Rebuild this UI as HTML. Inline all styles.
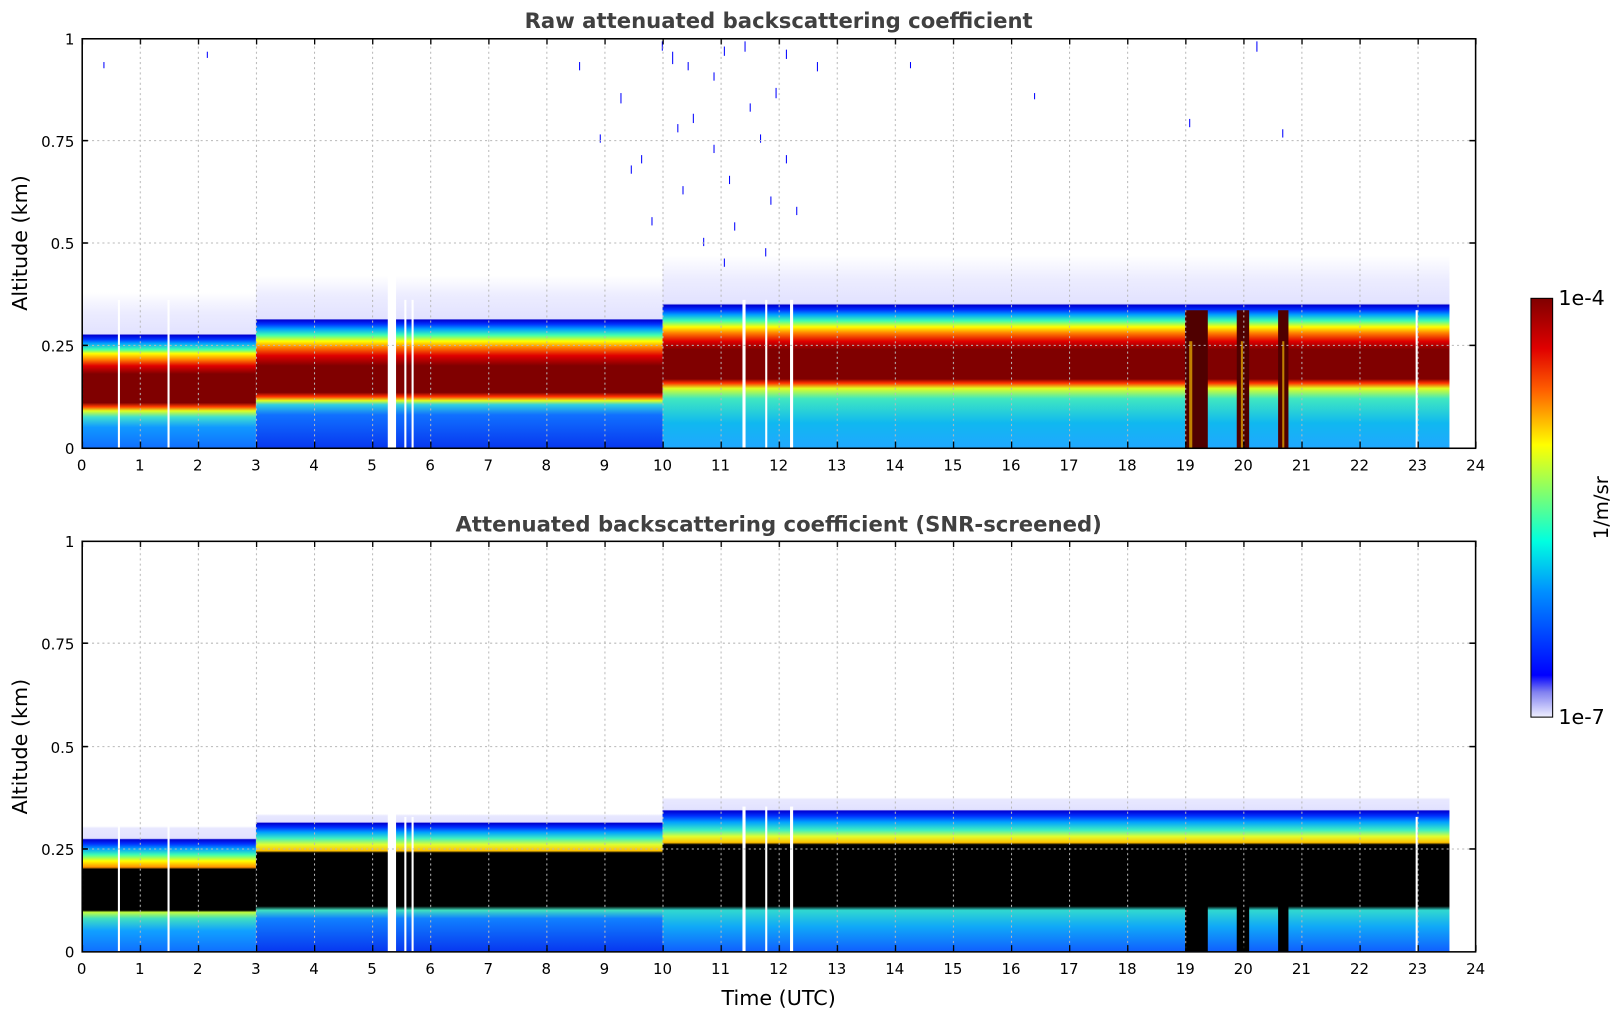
<!DOCTYPE html>
<html><head><meta charset="utf-8"><style>
html,body{margin:0;padding:0;background:#fff;overflow:hidden}
svg{display:block;font-family:"DejaVu Sans","Liberation Sans",sans-serif;}
.t{font-size:14.5px;fill:#000}
.ti{font-size:20.5px;font-weight:bold;fill:#404040}
.al{font-size:20px;fill:#000}
</style></head><body>
<svg width="1621" height="1020" viewBox="0 0 1567.6 986.4" preserveAspectRatio="none" xmlns="http://www.w3.org/2000/svg">
<defs>
<linearGradient id="tA" gradientUnits="userSpaceOnUse" x1="0" y1="433" x2="0" y2="37">
<stop offset="0" stop-color="#1070ff"/><stop offset="0.05" stop-color="#1098ff"/><stop offset="0.075" stop-color="#40e0d0"/><stop offset="0.09" stop-color="#e0ff20"/><stop offset="0.1" stop-color="#ff4000"/><stop offset="0.11" stop-color="#800000"/><stop offset="0.18" stop-color="#800000"/><stop offset="0.2" stop-color="#e00000"/><stop offset="0.215" stop-color="#ff8000"/><stop offset="0.23" stop-color="#ffff00"/><stop offset="0.24" stop-color="#40ffb0"/><stop offset="0.255" stop-color="#00a0ff"/><stop offset="0.265" stop-color="#0030ff"/><stop offset="0.275" stop-color="#0000d0"/><stop offset="0.278" stop-color="#e2e2ff"/><stop offset="0.33" stop-color="#ececff"/><stop offset="0.38" stop-color="#ffffff"/>
</linearGradient>
<linearGradient id="tB" gradientUnits="userSpaceOnUse" x1="0" y1="433" x2="0" y2="37">
<stop offset="0" stop-color="#0838f0"/><stop offset="0.08" stop-color="#1070ff"/><stop offset="0.105" stop-color="#30d0e0"/><stop offset="0.115" stop-color="#e0ff20"/><stop offset="0.125" stop-color="#ff3000"/><stop offset="0.135" stop-color="#800000"/><stop offset="0.2" stop-color="#800000"/><stop offset="0.225" stop-color="#e00000"/><stop offset="0.245" stop-color="#ff8000"/><stop offset="0.26" stop-color="#ffff00"/><stop offset="0.275" stop-color="#40ffb0"/><stop offset="0.29" stop-color="#00a0ff"/><stop offset="0.302" stop-color="#0030ff"/><stop offset="0.312" stop-color="#0000d0"/><stop offset="0.315" stop-color="#e2e2ff"/><stop offset="0.37" stop-color="#ececff"/><stop offset="0.42" stop-color="#ffffff"/>
</linearGradient>
<linearGradient id="tC" gradientUnits="userSpaceOnUse" x1="0" y1="433" x2="0" y2="37">
<stop offset="0" stop-color="#20a8ff"/><stop offset="0.06" stop-color="#10b8f0"/><stop offset="0.12" stop-color="#40e8c0"/><stop offset="0.145" stop-color="#e0ff20"/><stop offset="0.158" stop-color="#ff3000"/><stop offset="0.168" stop-color="#800000"/><stop offset="0.24" stop-color="#800000"/><stop offset="0.26" stop-color="#e00000"/><stop offset="0.28" stop-color="#ff8000"/><stop offset="0.295" stop-color="#ffff00"/><stop offset="0.31" stop-color="#40ffb0"/><stop offset="0.325" stop-color="#00a0ff"/><stop offset="0.337" stop-color="#0030ff"/><stop offset="0.348" stop-color="#0000d0"/><stop offset="0.352" stop-color="#e2e2ff"/><stop offset="0.41" stop-color="#ececff"/><stop offset="0.47" stop-color="#ffffff"/>
</linearGradient>
<linearGradient id="bA" gradientUnits="userSpaceOnUse" x1="0" y1="920" x2="0" y2="523">
<stop offset="0" stop-color="#1070ff"/><stop offset="0.05" stop-color="#10a0ff"/><stop offset="0.08" stop-color="#40e0c0"/><stop offset="0.095" stop-color="#c0ff40"/><stop offset="0.1" stop-color="#000"/><stop offset="0.2" stop-color="#000"/><stop offset="0.205" stop-color="#ff9000"/><stop offset="0.22" stop-color="#ffff00"/><stop offset="0.235" stop-color="#40ffb0"/><stop offset="0.25" stop-color="#00a0ff"/><stop offset="0.262" stop-color="#0030ff"/><stop offset="0.272" stop-color="#0000d0"/><stop offset="0.275" stop-color="#e2e2ff"/><stop offset="0.3" stop-color="#e8e8ff"/><stop offset="0.305" stop-color="#ffffff"/>
</linearGradient>
<linearGradient id="bB" gradientUnits="userSpaceOnUse" x1="0" y1="920" x2="0" y2="523">
<stop offset="0" stop-color="#0838f0"/><stop offset="0.08" stop-color="#1080ff"/><stop offset="0.1" stop-color="#40e0c0"/><stop offset="0.11" stop-color="#000"/><stop offset="0.24" stop-color="#000"/><stop offset="0.245" stop-color="#ffc000"/><stop offset="0.26" stop-color="#e0ff30"/><stop offset="0.275" stop-color="#40f0c0"/><stop offset="0.29" stop-color="#00a0ff"/><stop offset="0.302" stop-color="#0030ff"/><stop offset="0.312" stop-color="#0000d0"/><stop offset="0.315" stop-color="#e2e2ff"/><stop offset="0.33" stop-color="#e8e8ff"/><stop offset="0.335" stop-color="#ffffff"/>
</linearGradient>
<linearGradient id="bC" gradientUnits="userSpaceOnUse" x1="0" y1="920" x2="0" y2="523">
<stop offset="0" stop-color="#1060ff"/><stop offset="0.06" stop-color="#10a8f8"/><stop offset="0.1" stop-color="#30d8d0"/><stop offset="0.11" stop-color="#000"/><stop offset="0.26" stop-color="#000"/><stop offset="0.265" stop-color="#ffc000"/><stop offset="0.28" stop-color="#e0ff30"/><stop offset="0.295" stop-color="#40f0c0"/><stop offset="0.315" stop-color="#00a0ff"/><stop offset="0.33" stop-color="#0030ff"/><stop offset="0.342" stop-color="#0000d0"/><stop offset="0.345" stop-color="#e2e2ff"/><stop offset="0.37" stop-color="#e8e8ff"/><stop offset="0.375" stop-color="#ffffff"/>
</linearGradient>
<linearGradient id="cb" x1="0" y1="1" x2="0" y2="0">
<stop offset="0" stop-color="#f0f0ff"/><stop offset="0.06" stop-color="#8080f0"/><stop offset="0.1" stop-color="#0000ff"/><stop offset="0.3" stop-color="#0090ff"/><stop offset="0.42" stop-color="#00ffe0"/><stop offset="0.55" stop-color="#90ff60"/><stop offset="0.65" stop-color="#ffff00"/><stop offset="0.78" stop-color="#ff6000"/><stop offset="0.88" stop-color="#e00000"/><stop offset="1" stop-color="#800000"/>
</linearGradient>
<pattern id="vg" patternUnits="userSpaceOnUse" x="79" y="0" width="56.1667" height="1020">
<line x1="0.5" y1="0" x2="0.5" y2="1020" stroke="#b8b8b8" stroke-width="1" stroke-dasharray="2,3"/>
</pattern>
<pattern id="tk" patternUnits="userSpaceOnUse" x="79" y="0" width="56.1667" height="1020">
<line x1="0.5" y1="0" x2="0.5" y2="1020" stroke="#000" stroke-width="1.5"/>
</pattern>
</defs>

<!-- TOP PLOT -->
<rect x="79" y="37" width="168.5" height="396" fill="url(#tA)"/>
<rect x="247.5" y="37" width="393.2" height="396" fill="url(#tB)"/>
<rect x="640.7" y="37" width="761" height="396" fill="url(#tC)"/>
<g fill="#500000"><rect x="1146" y="300" width="22" height="133"/><rect x="1196" y="300" width="12" height="133"/><rect x="1236" y="300" width="10" height="133"/></g>
<g fill="#c08000"><rect x="1150" y="330" width="3" height="103"/><rect x="1200" y="330" width="2" height="103"/><rect x="1240" y="330" width="2" height="103"/></g>
<g fill="#fff"><rect x="375" y="250" width="8" height="183"/><rect x="391" y="290" width="2" height="143"/><rect x="398" y="290" width="2" height="143"/><rect x="718" y="290" width="3" height="143"/><rect x="740" y="290" width="2" height="143"/><rect x="764" y="290" width="3" height="143"/><rect x="114" y="290" width="2" height="143"/><rect x="162" y="290" width="2" height="143"/><rect x="1369" y="300" width="2" height="133"/></g>
<g fill="#0000ff">
<rect x="560" y="60" width="1" height="8"/><rect x="600" y="90" width="1" height="10"/><rect x="620" y="150" width="1" height="8"/><rect x="650" y="50" width="1" height="12"/><rect x="670" y="110" width="1" height="9"/><rect x="690" y="70" width="1" height="8"/><rect x="705" y="170" width="1" height="8"/><rect x="720" y="40" width="1" height="10"/><rect x="735" y="130" width="1" height="8"/><rect x="750" y="85" width="1" height="10"/><rect x="770" y="200" width="1" height="8"/><rect x="790" y="60" width="1" height="9"/><rect x="580" y="130" width="1" height="8"/><rect x="630" y="210" width="1" height="8"/><rect x="680" y="230" width="1" height="8"/><rect x="760" y="150" width="1" height="8"/><rect x="100" y="60" width="1" height="6"/><rect x="200" y="50" width="1" height="6"/><rect x="1150" y="115" width="1" height="8"/><rect x="1215" y="40" width="1" height="10"/><rect x="1240" y="125" width="1" height="8"/><rect x="1000" y="90" width="1" height="6"/><rect x="880" y="60" width="1" height="6"/><rect x="660" y="180" width="1" height="8"/><rect x="700" y="250" width="1" height="8"/><rect x="740" y="240" width="1" height="8"/>
<rect x="640" y="40" width="1" height="9"/><rect x="700" y="45" width="1" height="9"/><rect x="760" y="48" width="1" height="9"/><rect x="610" y="160" width="1" height="8"/><rect x="725" y="100" width="1" height="8"/><rect x="690" y="140" width="1" height="8"/><rect x="655" y="120" width="1" height="8"/><rect x="745" y="190" width="1" height="8"/><rect x="710" y="215" width="1" height="8"/><rect x="665" y="60" width="1" height="8"/>
</g>
<rect x="79" y="37" width="1348" height="396" fill="url(#vg)"/>
<g stroke="#b8b8b8" stroke-dasharray="2,3"><line x1="79" y1="136" x2="1427" y2="136"/><line x1="79" y1="235" x2="1427" y2="235"/><line x1="79" y1="334" x2="1427" y2="334"/></g>
<rect x="79.5" y="37.5" width="1347.5" height="396" fill="none" stroke="#000" stroke-width="1.5"/>
<rect x="79" y="427" width="1349" height="6" fill="url(#tk)"/><rect x="79" y="37" width="1349" height="6" fill="url(#tk)"/>
<g stroke="#000" stroke-width="1.5"><line x1="79" y1="136" x2="85" y2="136"/><line x1="79" y1="235" x2="85" y2="235"/><line x1="79" y1="334" x2="85" y2="334"/><line x1="1421" y1="136" x2="1427" y2="136"/><line x1="1421" y1="235" x2="1427" y2="235"/><line x1="1421" y1="334" x2="1427" y2="334"/></g>
<text class="ti" x="753" y="27" text-anchor="middle">Raw attenuated backscattering coefficient</text>
<g class="t" text-anchor="end"><text x="72" y="43">1</text><text x="72" y="142">0.75</text><text x="72" y="241">0.5</text><text x="72" y="340">0.25</text><text x="72" y="439">0</text></g>
<text class="al" transform="translate(26 235) rotate(-90)" text-anchor="middle">Altitude (km)</text>
<g class="t" text-anchor="middle"><text x="79" y="455">0</text><text x="135.2" y="455">1</text><text x="191.3" y="455">2</text><text x="247.5" y="455">3</text><text x="303.7" y="455">4</text><text x="359.8" y="455">5</text><text x="416" y="455">6</text><text x="472.2" y="455">7</text><text x="528.3" y="455">8</text><text x="584.5" y="455">9</text><text x="640.7" y="455">10</text><text x="696.8" y="455">11</text><text x="753" y="455">12</text><text x="809.2" y="455">13</text><text x="865.3" y="455">14</text><text x="921.5" y="455">15</text><text x="977.7" y="455">16</text><text x="1033.8" y="455">17</text><text x="1090" y="455">18</text><text x="1146.2" y="455">19</text><text x="1202.3" y="455">20</text><text x="1258.5" y="455">21</text><text x="1314.7" y="455">22</text><text x="1370.8" y="455">23</text><text x="1427" y="455">24</text></g>

<!-- BOTTOM PLOT -->
<rect x="79" y="523" width="168.5" height="397" fill="url(#bA)"/>
<rect x="247.5" y="523" width="393.2" height="397" fill="url(#bB)"/>
<rect x="640.7" y="523" width="761" height="397" fill="url(#bC)"/>
<g fill="#000"><rect x="1146" y="820" width="22" height="100"/><rect x="1196" y="820" width="12" height="100"/><rect x="1236" y="820" width="10" height="100"/></g>
<g fill="#fff"><rect x="375" y="780" width="8" height="140"/><rect x="391" y="790" width="2" height="130"/><rect x="398" y="790" width="2" height="130"/><rect x="718" y="780" width="3" height="140"/><rect x="740" y="780" width="2" height="140"/><rect x="764" y="780" width="3" height="140"/><rect x="114" y="790" width="2" height="130"/><rect x="162" y="790" width="2" height="130"/><rect x="1369" y="790" width="2" height="130"/></g>
<rect x="79" y="523" width="1348" height="397" fill="url(#vg)"/>
<g stroke="#b8b8b8" stroke-dasharray="2,3"><line x1="79" y1="622" x2="1427" y2="622"/><line x1="79" y1="722" x2="1427" y2="722"/><line x1="79" y1="821" x2="1427" y2="821"/></g>
<rect x="79.5" y="523.5" width="1347.5" height="397" fill="none" stroke="#000" stroke-width="1.5"/>
<rect x="79" y="914" width="1349" height="6" fill="url(#tk)"/><rect x="79" y="523" width="1349" height="6" fill="url(#tk)"/>
<g stroke="#000" stroke-width="1.5"><line x1="79" y1="622" x2="85" y2="622"/><line x1="79" y1="722" x2="85" y2="722"/><line x1="79" y1="821" x2="85" y2="821"/><line x1="1421" y1="622" x2="1427" y2="622"/><line x1="1421" y1="722" x2="1427" y2="722"/><line x1="1421" y1="821" x2="1427" y2="821"/></g>
<text class="ti" x="753" y="514" text-anchor="middle">Attenuated backscattering coefficient (SNR-screened)</text>
<g class="t" text-anchor="end"><text x="72" y="529">1</text><text x="72" y="628">0.75</text><text x="72" y="728">0.5</text><text x="72" y="827">0.25</text><text x="72" y="926">0</text></g>
<text class="al" transform="translate(26 722) rotate(-90)" text-anchor="middle">Altitude (km)</text>
<g class="t" text-anchor="middle"><text x="79" y="942">0</text><text x="135.2" y="942">1</text><text x="191.3" y="942">2</text><text x="247.5" y="942">3</text><text x="303.7" y="942">4</text><text x="359.8" y="942">5</text><text x="416" y="942">6</text><text x="472.2" y="942">7</text><text x="528.3" y="942">8</text><text x="584.5" y="942">9</text><text x="640.7" y="942">10</text><text x="696.8" y="942">11</text><text x="753" y="942">12</text><text x="809.2" y="942">13</text><text x="865.3" y="942">14</text><text x="921.5" y="942">15</text><text x="977.7" y="942">16</text><text x="1033.8" y="942">17</text><text x="1090" y="942">18</text><text x="1146.2" y="942">19</text><text x="1202.3" y="942">20</text><text x="1258.5" y="942">21</text><text x="1314.7" y="942">22</text><text x="1370.8" y="942">23</text><text x="1427" y="942">24</text></g>
<text class="al" x="753" y="972" text-anchor="middle">Time (UTC)</text>

<!-- COLORBAR -->
<rect x="1480.5" y="288.5" width="21" height="405" fill="url(#cb)" stroke="#000" stroke-width="1"/>
<text class="t" style="font-size:20px" x="1507" y="295">1e-4</text>
<text class="t" style="font-size:20px" x="1507" y="700">1e-7</text>
<text class="al" style="font-size:19px" transform="translate(1555 491) rotate(-90)" text-anchor="middle">1/m/sr</text>
</svg>
</body></html>
